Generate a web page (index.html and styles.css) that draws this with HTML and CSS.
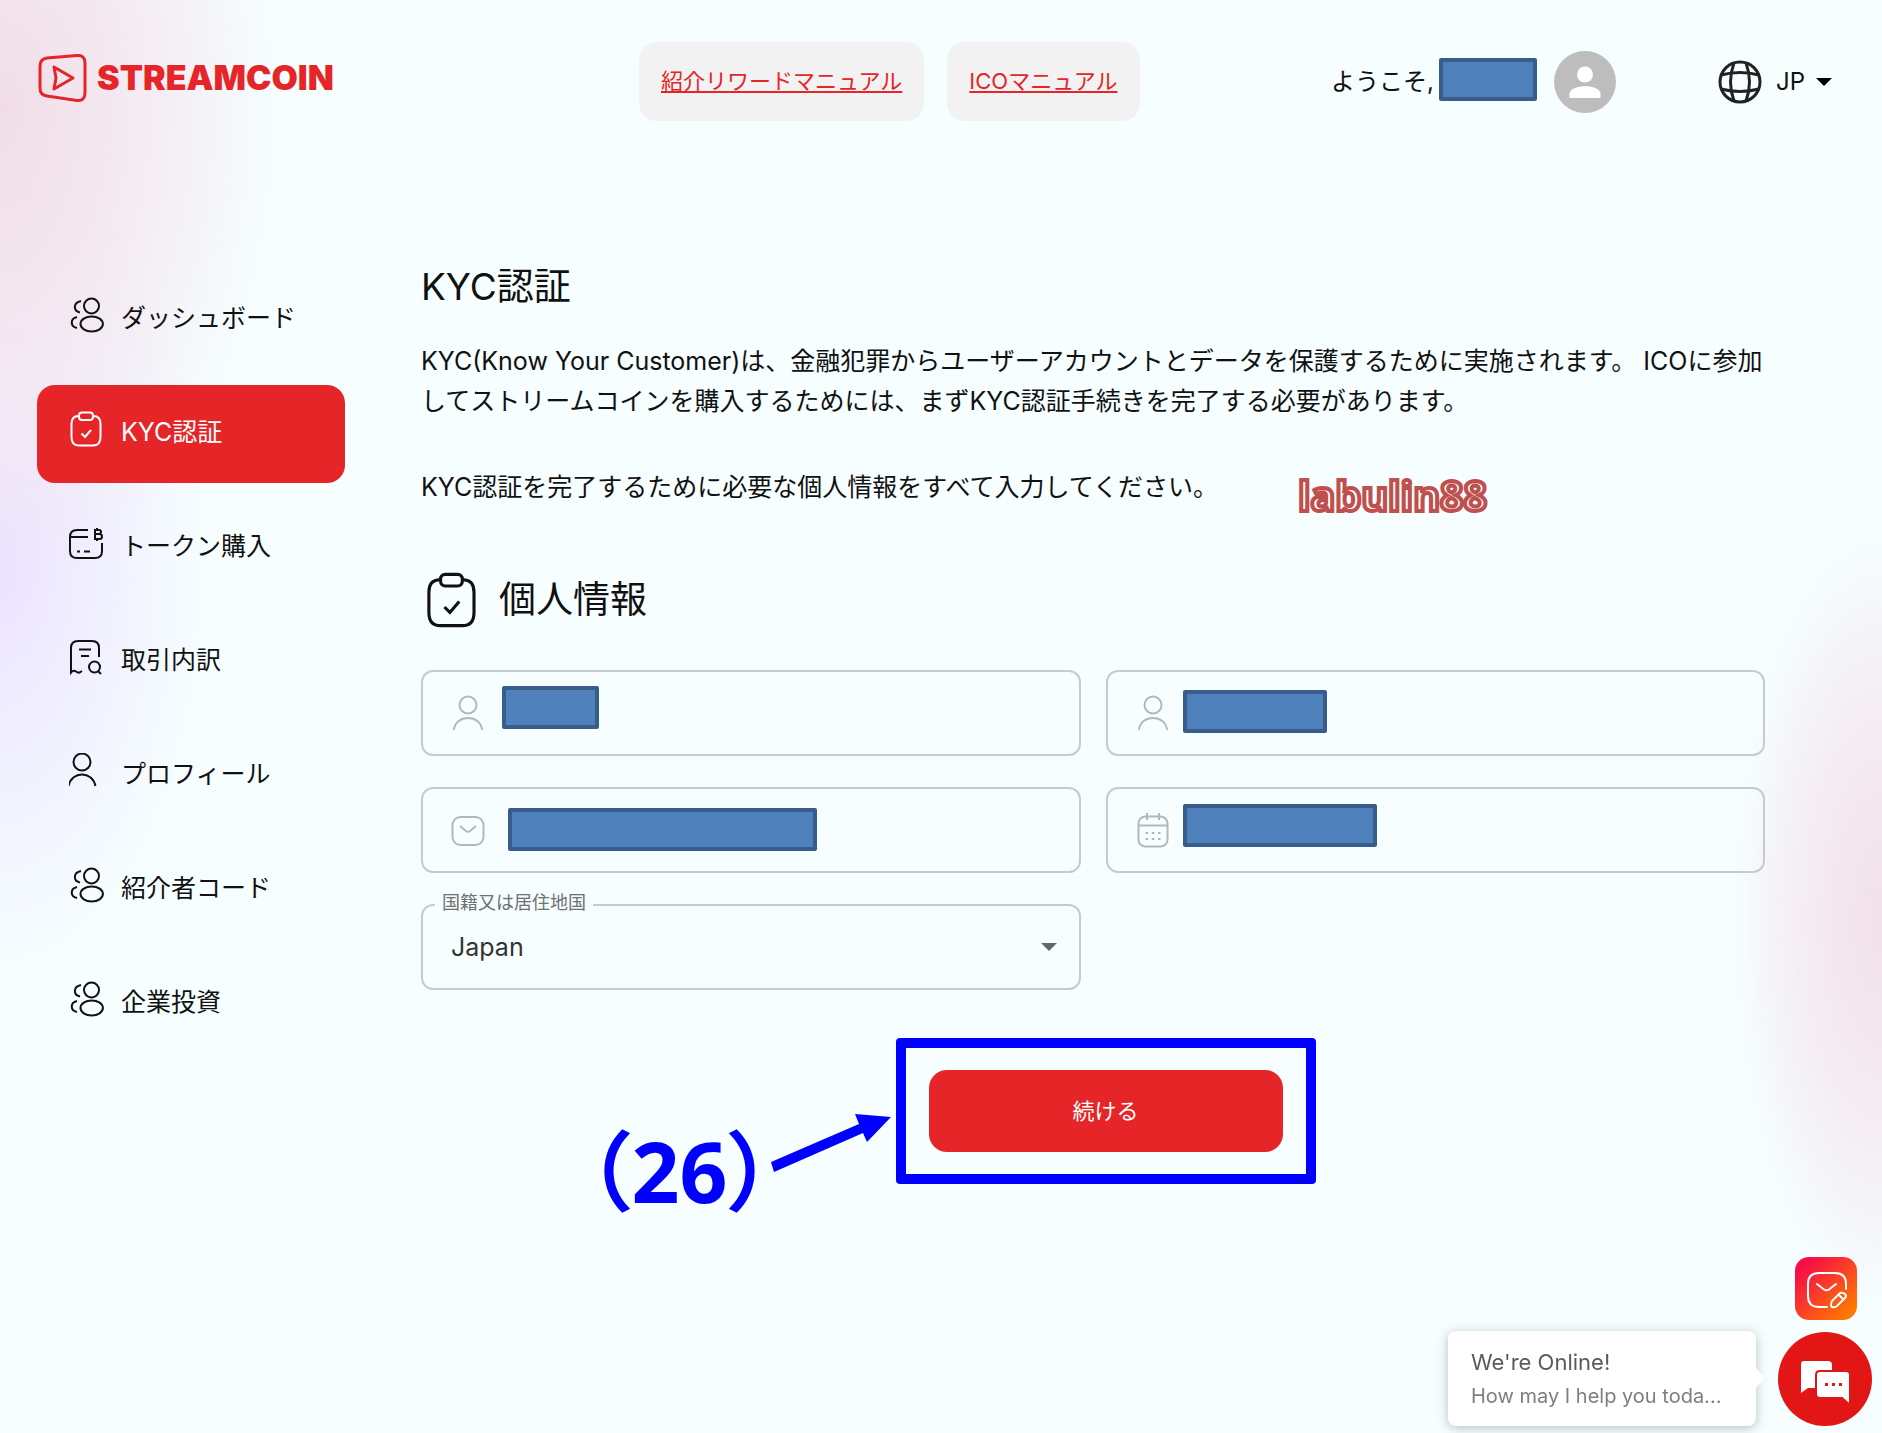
FILE: index.html
```html
<!DOCTYPE html>
<html lang="ja">
<head>
    <meta charset="UTF-8">
    <meta name="viewport" content="width=device-width, initial-scale=1.0">
    <title>KYC認証 - STREAMCOIN</title>
    <link rel="stylesheet" href="styles.css">
</head>
<body>
    <!-- Shared icons -->
    <svg class="sprite" aria-hidden="true">
        <symbol id="icon-users" viewBox="0 0 36 36">
            <circle cx="22.5" cy="9" r="7.5"/>
            <ellipse cx="22.7" cy="27" rx="11.2" ry="7.5"/>
            <path d="M12 4C4 5.500 4 14 11 15.500M8 20C1 21.500 1 29.500 8 31"/>
        </symbol>
        <symbol id="icon-clipboard" viewBox="0 0 36 36">
            <path d="M10 5H9.500C4.500 5 2.500 8 2.500 13V26C2.500 32 5 34.500 10 34.500H24C29 34.500 31.500 32 31.500 26V13C31.500 8 29.500 5 24.500 5H24"/>
            <rect x="10" y="1.500" width="14" height="7.500" rx="3"/>
            <path d="M12.500 22.500L16 26L22 19"/>
        </symbol>
        <symbol id="icon-wallet" viewBox="0 0 36 36">
            <path d="M19 5H8C3 5 1 7 1 12V26C1 31 3 33 8 33H26C31 33 33 31 33 26V18M1 12H19M8 26.500H11M15 26.500H21"/>
            <path d="M25 5H30Q32 5 32 7T30 9H26H30.500Q33 9 33 11.500T30.500 14H25M26 5V14M28 3V5M28 14V16"/>
        </symbol>
        <symbol id="icon-history" viewBox="0 0 36 36">
            <path d="M30 18V9C30 4 28 2 23 2H9C4 2 2 4 2 9V33.500Q4.500 30.500 7 32.500T11.500 33L13 32M10 10.500H22M12 17H20"/>
            <circle cx="25.500" cy="28" r="5.500"/>
            <path d="M29 32L32 35"/>
        </symbol>
        <symbol id="icon-user" viewBox="0 0 36 36">
            <circle cx="13" cy="9" r="8.500"/>
            <path d="M-0.500 33C3 17.500 23 17.500 26.500 33"/>
        </symbol>
    </svg>

    <header class="header">
        <a class="logo" href="#">
            <svg class="logo-icon" viewBox="0 0 50 48" aria-hidden="true">
                <path d="M9 4L39 1.500Q47 1 47 9V39Q47 47 39 46.500L9 42Q2 41 2 34V12Q2 5 9 4Z"/>
                <path d="M16 13L35 24L16 35L18 24Z"/>
            </svg>
            <span>STREAMCOIN</span>
        </a>
        <nav class="manuals" aria-label="マニュアル">
            <a href="#">紹介リワードマニュアル</a>
            <a href="#">ICOマニュアル</a>
        </nav>
        <div class="user">
            <span>ようこそ,</span>
            <span class="redacted redacted-user"></span>
            <svg class="avatar" viewBox="0 0 62 62" aria-hidden="true">
                <circle cx="31" cy="31" r="31" fill="#bdbdbd"/>
                <circle cx="31" cy="23.500" r="8" fill="#fff"/>
                <path d="M15.500 47V43C15.500 32.500 46.500 32.500 46.500 43V47Z" fill="#fff"/>
            </svg>
        </div>
        <div class="language">
            <svg class="globe" viewBox="0 0 44 44" aria-hidden="true">
                <circle cx="22" cy="22" r="20"/>
                <path d="M16 3Q9 22 16 41M28 3Q35 22 28 41M3 15Q22 10 41 15M3 29Q22 34 41 29"/>
            </svg>
            <select aria-label="言語">
                <option>JP</option>
            </select>
            <svg class="caret" viewBox="0 0 16 8" aria-hidden="true"><path d="M0 0H16L8 8Z"/></svg>
        </div>
    </header>

    <div class="layout">
        <nav class="sidebar" aria-label="メニュー">
            <a href="#"><svg class="icon"><use href="#icon-users"/></svg>ダッシュボード</a>
            <a href="#" class="active" aria-current="page"><svg class="icon"><use href="#icon-clipboard"/></svg>KYC認証</a>
            <a href="#"><svg class="icon"><use href="#icon-wallet"/></svg>トークン購入</a>
            <a href="#"><svg class="icon"><use href="#icon-history"/></svg>取引内訳</a>
            <a href="#"><svg class="icon"><use href="#icon-user"/></svg>プロフィール</a>
            <a href="#"><svg class="icon"><use href="#icon-users"/></svg>紹介者コード</a>
            <a href="#"><svg class="icon"><use href="#icon-users"/></svg>企業投資</a>
        </nav>

        <main class="content">
            <h1>KYC認証</h1>
            <p class="intro">KYC(Know Your Customer)は、金融犯罪からユーザーアカウントとデータを保護するために実施されます。 ICOに参加してストリームコインを購入するためには、まずKYC認証手続きを完了する必要があります。</p>
            <div class="lead">
                <p>KYC認証を完了するために必要な個人情報をすべて入力してください。</p>
                <span class="watermark">labulin88</span>
            </div>

            <h2>
                <svg class="title-icon" aria-hidden="true"><use href="#icon-clipboard"/></svg>
                個人情報
            </h2>

            <form>
                <div class="fields">
                    <div class="field">
                        <svg class="field-icon" viewBox="0 0 34 36" aria-hidden="true">
                            <circle cx="17" cy="10" r="8.500"/>
                            <path d="M3 35C4 19 30 19 31 35"/>
                        </svg>
                        <input type="text" aria-label="名">
                        <span class="redacted redacted-first"></span>
                    </div>
                    <div class="field">
                        <svg class="field-icon" viewBox="0 0 34 36" aria-hidden="true">
                            <circle cx="17" cy="10" r="8.500"/>
                            <path d="M3 35C4 19 30 19 31 35"/>
                        </svg>
                        <input type="text" aria-label="姓">
                        <span class="redacted redacted-last"></span>
                    </div>
                    <div class="field">
                        <svg class="field-icon" viewBox="0 0 34 36" aria-hidden="true">
                            <rect x="1.500" y="5" width="31" height="28" rx="8"/>
                            <path d="M9 14L15 19Q17 20.500 19 19L25 14"/>
                        </svg>
                        <input type="email" aria-label="メールアドレス">
                        <span class="redacted redacted-email"></span>
                    </div>
                    <div class="field">
                        <svg class="field-icon" viewBox="0 0 34 36" aria-hidden="true">
                            <rect x="2.500" y="4.500" width="29" height="30" rx="7"/>
                            <path d="M3 13.500H31M11 1V8M23 1V8"/>
                            <path d="M9.500 21H12M15.800 21H18.300M22 21H24.500M9.500 27H12M15.800 27H18.300M22 27H24.500"/>
                        </svg>
                        <input type="text" aria-label="生年月日">
                        <span class="redacted redacted-birth"></span>
                    </div>
                    <div class="field field-select">
                        <label for="country">国籍又は居住地国</label>
                        <select id="country">
                            <option>Japan</option>
                        </select>
                        <svg class="caret" viewBox="0 0 16 8" aria-hidden="true"><path d="M0 0H16L8 8Z"/></svg>
                    </div>
                </div>

                <div class="submit-row">
                    <div class="highlight">
                        <button type="submit" class="submit">続ける</button>
                        <span class="step">（<b>26</b>）</span>
                        <svg class="arrow" viewBox="0 0 124 64" aria-hidden="true">
                            <path d="M2 50L90 12L86 2L122 5L98 30L94 21L5 60Z"/>
                        </svg>
                    </div>
                </div>
            </form>
        </main>
    </div>

    <aside class="support">
        <button type="button" class="mail-button" aria-label="お問い合わせ">
            <svg viewBox="0 0 62 62" aria-hidden="true">
                <path d="M32 49H24Q13 49 13 38V26Q13 15 24 15H40Q51 15 51 26V31M22 26L29 31.500Q31.500 33 34 31.500L41 26"/>
                <path d="M37 43L45 35Q48 34 50 36T50 40L42 48Q39 50 37 49T37 43ZM44 37L48 41"/>
            </svg>
        </button>
        <div class="chat">
            <div class="chat-bubble">
                <strong>We're Online!</strong>
                <span>How may I help you toda...</span>
            </div>
            <button type="button" class="chat-button" aria-label="チャット">
                <svg viewBox="0 0 94 94" aria-hidden="true">
                    <path d="M26 29H50Q54 29 54 33V52Q54 56 50 56H30L23 61V32Q23 29 26 29Z" fill="#fff"/>
                    <path d="M42 39H68Q72 39 72 43V73L64 66H42Q38 66 38 62V43Q38 39 42 39Z" fill="#fff" stroke="#e31616" stroke-width="2"/>
                    <path d="M47 52.500H50M54 52.500H57M61 52.500H64" stroke="#e31616" stroke-width="3"/>
                </svg>
            </button>
        </div>
    </aside>
</body>
</html>
```
FILE: styles.css
```css
* {
    box-sizing: border-box;
}

body {
    margin: 0;
    min-height: 100vh;
    font-family: Inter, "Noto Sans CJK JP", sans-serif;
    font-size: 25px;
    line-height: 40px;
    color: #111;
    background-color: #f6feff;
    background-image:
        radial-gradient(ellipse 280px 480px at 0 110px, #f1dde8 0%, rgba(243, 228, 237, 0.8) 45%, rgba(246, 254, 255, 0) 100%),
        radial-gradient(ellipse 210px 420px at 0 560px, #ebe2ff 0%, rgba(238, 232, 255, 0.6) 50%, rgba(246, 254, 255, 0) 100%),
        radial-gradient(ellipse 150px 390px at 100% 920px, #f2e0e8 0%, rgba(243, 228, 236, 0.7) 50%, rgba(246, 254, 255, 0) 100%);
    background-repeat: no-repeat;
}

a {
    color: inherit;
    text-decoration: none;
}

button,
input,
select {
    font: inherit;
    color: inherit;
    border: none;
    background: none;
    padding: 0;
}

button {
    cursor: pointer;
}

select {
    appearance: none;
}

svg {
    flex-shrink: 0;
}

.sprite {
    display: none;
}

/* Header */
.header {
    display: flex;
    align-items: center;
    padding: 42px 50px 0 38px;
}

.logo {
    flex: 0 0 601px;
    display: flex;
    align-items: center;
    gap: 9px;
    padding-bottom: 8px;
    font-size: 34px;
    font-weight: 900;
    color: #e52528;
}

.logo-icon {
    width: 50px;
    height: 48px;
    fill: none;
    stroke: #e52528;
    stroke-width: 3;
    stroke-linejoin: round;
}

.manuals {
    flex: 1;
    display: flex;
    gap: 23px;
}

.manuals a {
    padding: 19px 22px 20px;
    border-radius: 18px;
    background-color: #f2f2f2;
    font-size: 22px;
    color: #e52528;
    text-decoration: underline;
}

.user {
    display: flex;
    align-items: center;
    gap: 5px;
}

.avatar {
    width: 62px;
    height: 62px;
    margin-left: 12px;
}

.language {
    display: flex;
    align-items: center;
    margin-left: 102px;
}

.user,
.language {
    font-size: 24px;
}

.globe {
    width: 44px;
    height: 44px;
    margin-right: 14px;
    fill: none;
    stroke: #222;
    stroke-width: 3;
}

.caret {
    width: 16px;
    height: 8px;
    pointer-events: none;
}

.language .caret {
    margin-left: 10px;
}

/* Blocks covering private data */
.redacted {
    height: 43px;
    border: 4px solid #385d8a;
    border-radius: 2px;
    background-color: #4f81bd;
}

.redacted-user {
    width: 98px;
    margin-bottom: 4px;
}

.field .redacted {
    position: absolute;
}

.redacted-first {
    left: 79px;
    top: 14px;
    width: 97px;
}

.redacted-last {
    left: 75px;
    top: 18px;
    width: 144px;
}

.redacted-email {
    left: 85px;
    top: 19px;
    width: 309px;
}

.redacted-birth {
    left: 75px;
    top: 15px;
    width: 194px;
}

/* Page layout */
.layout {
    display: flex;
    gap: 76px;
    padding: 142px 92px 0 37px;
}

.sidebar {
    flex: 0 0 308px;
    display: flex;
    flex-direction: column;
    gap: 16px;
    padding-top: 8px;
}

.sidebar a {
    display: flex;
    align-items: center;
    gap: 16px;
    height: 98px;
    padding: 0 32px 4px;
    border-radius: 18px;
}

.sidebar .active {
    background-color: #e52528;
    color: #fff;
}

.icon {
    width: 36px;
    height: 36px;
    margin-bottom: 6px;
    overflow: visible;
    fill: none;
    stroke: currentColor;
    stroke-width: 2;
}

.content {
    flex: 1;
    min-width: 0;
}

h1,
h2 {
    margin: 0;
    font-size: 37px;
    line-height: 48px;
    font-weight: 400;
}

h1 {
    margin-bottom: 30px;
}

p {
    margin: 0;
}

.intro {
    padding-right: 16px;
}

.lead {
    display: flex;
    align-items: flex-start;
    gap: 80px;
    margin-top: 46px;
}

.watermark {
    padding-top: 8px;
    font-family: "Open Sans", sans-serif;
    font-size: 41px;
    font-weight: 700;
    color: #fff;
    -webkit-text-stroke: 4px #c0504d;
}

h2 {
    display: flex;
    align-items: center;
    gap: 14px;
    margin: 57px 0 42px;
}

.title-icon {
    width: 64px;
    height: 56px;
    overflow: visible;
    fill: none;
    stroke: currentColor;
    stroke-width: 2;
}

/* Form */
.fields {
    display: grid;
    grid-template-columns: 1fr 1fr;
    gap: 31px 25px;
    padding-right: 25px;
}

.field {
    position: relative;
    display: flex;
    align-items: center;
    gap: 16px;
    height: 86px;
    padding: 0 22px 0 28px;
    border: 2px solid #c6cccd;
    border-radius: 12px;
}

.field-icon {
    width: 34px;
    height: 36px;
    fill: none;
    stroke: #b4b8b8;
    stroke-width: 2;
}

.field input,
.field select {
    flex: 1;
    min-width: 0;
    height: 100%;
    color: #333;
}

.field label {
    position: absolute;
    left: 12px;
    top: -17px;
    padding: 0 7px;
    background-color: #f6feff;
    font-size: 18px;
    line-height: 28px;
    color: #6d7172;
}

.field .caret {
    fill: #666;
}

.submit-row {
    display: flex;
    justify-content: center;
    margin-top: 48px;
}

.highlight {
    position: relative;
    padding: 22px 23px;
    border: 10px solid #00f;
    border-radius: 4px;
}

.submit {
    display: block;
    width: 354px;
    height: 82px;
    border-radius: 18px;
    background-color: #e52528;
    color: #fff;
    font-size: 22px;
}

/* Step number and arrow beside the highlighted button */
.step {
    position: absolute;
    right: 494px;
    top: 73px;
    font-family: "Open Sans", "Noto Sans CJK JP", sans-serif;
    font-size: 84px;
    line-height: 100px;
    white-space: nowrap;
    color: #00f;
    -webkit-text-stroke: 3px #00f;
}

.step b {
    -webkit-text-stroke: 0;
}

.arrow {
    position: absolute;
    right: 413px;
    top: 64px;
    width: 124px;
    height: 64px;
    fill: #00f;
}

/* Support widgets */
.support {
    position: fixed;
    right: 10px;
    bottom: 7px;
    display: flex;
    flex-direction: column;
    align-items: flex-end;
    gap: 11px;
}

.mail-button {
    width: 62px;
    height: 63px;
    margin-right: 15px;
    border-radius: 14px;
    background-image: linear-gradient(135deg, #f60f45 15%, #fb4026 50%, #ff7a00 90%);
}

.mail-button svg {
    display: block;
    fill: none;
    stroke: #fff;
    stroke-width: 2;
    stroke-linecap: round;
}

.chat {
    display: flex;
    align-items: center;
    gap: 22px;
}

.chat-bubble {
    position: relative;
    display: flex;
    flex-direction: column;
    width: 308px;
    padding: 14px 23px 13px;
    border-radius: 8px;
    background-color: #fff;
    box-shadow: 0 2px 12px rgba(0, 0, 0, 0.25);
    font-size: 20px;
    line-height: 34px;
    white-space: nowrap;
    color: #7a8083;
}

.chat-bubble strong {
    font-size: 22px;
    font-weight: 400;
    color: #565c60;
}

.chat-bubble::after {
    content: "";
    position: absolute;
    right: -9px;
    top: 36px;
    border: 11px solid transparent;
    border-left: 10px solid #fff;
    border-right: none;
}

.chat-button {
    width: 94px;
    height: 94px;
    border-radius: 50%;
    background-color: #e31616;
}

.chat-button svg {
    display: block;
}
```
